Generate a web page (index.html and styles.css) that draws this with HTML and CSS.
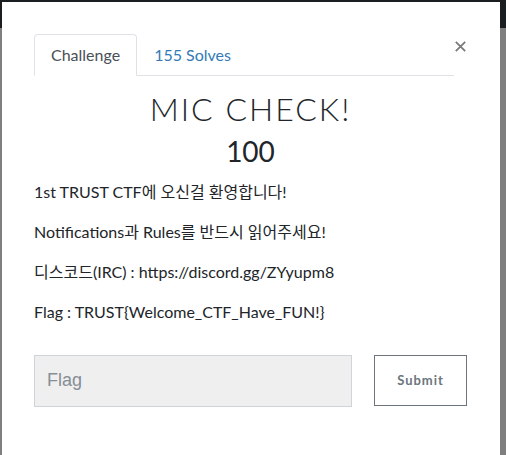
FILE: index.html
```html
<!DOCTYPE html>
<html lang="ko">
<head>
<meta charset="utf-8">
<title>MIC CHECK!</title>
<link rel="stylesheet" href="styles.css">
</head>
<body>
<div class="page">
  <div class="navbar"></div>
  <div class="backdrop"></div>
</div>
<div class="modal">
  <div class="modal-head">
    <nav class="tabs">
      <a class="tab active">Challenge</a>
      <a class="tab">155 Solves</a>
    </nav>
    <button class="close" aria-label="Close">
      <svg width="11" height="11" viewBox="0 0 11 11"><path d="M0.8 0.8 L10.2 10.2 M10.2 0.8 L0.8 10.2" stroke="#7a7a7a" stroke-width="1.8" fill="none"/></svg>
    </button>
  </div>
  <h2 class="title">MIC CHECK!</h2>
  <h3 class="value">100</h3>
  <div class="desc">
    <p>1st TRUST CTF에 오신걸 환영합니다!</p>
    <p>Notifications과 Rules를 반드시 읽어주세요!</p>
    <p>디스코드(IRC) : https://discord.gg/ZYyupm8</p>
    <p>Flag : TRUST{Welcome_CTF_Have_FUN!}</p>
  </div>
  <form class="flag-form">
    <input class="flag-input" type="text" placeholder="Flag">
    <button class="submit" type="button">Submit</button>
  </form>
</div>
</body>
</html>
```

FILE: styles.css
```css
html, body {
  margin: 0;
  padding: 0;
}
body {
  width: 506px;
  height: 455px;
  overflow: hidden;
  background: #7f7f7f;
  font-family: "Lato", "Noto Sans CJK KR", sans-serif;
}
.page {
  display: flex;
  flex-direction: column;
  height: 455px;
}
.navbar {
  height: 28px;
  background: #1b1e21;
}
.backdrop {
  flex: 1;
  background: #7f7f7f;
}
.modal {
  position: absolute;
  left: 2px;
  top: 2px;
  width: 498px;
  height: 470px;
  box-sizing: border-box;
  background: #fff;
  padding: 32px 33px 0 32px;
  color: #212529;
}
.modal-head {
  display: flex;
  align-items: flex-start;
}
.tabs {
  flex: 1;
  display: flex;
  border-bottom: 1px solid #dee2e6;
}
.tab {
  display: block;
  padding: 8px 16px;
  font-size: 16px;
  line-height: 24px;
  border: 1px solid transparent;
  border-bottom: none;
  margin-bottom: -1px;
  border-radius: 4px 4px 0 0;
  color: #337ab7;
}
.tab.active {
  color: #495057;
  border-color: #dee2e6;
  border-bottom: 1px solid #fff;
  background: #fff;
}
.close {
  width: 13px;
  padding: 0 0 0 1px;
  margin-top: 7px;
  border: none;
  background: none;
  display: flex;
}
.title {
  margin: 14px 0 0;
  text-align: center;
  font-size: 32px;
  font-weight: 300;
  line-height: 1.2;
  letter-spacing: 2px;
}
.value {
  margin: 7px 0 0;
  text-align: center;
  font-size: 28px;
  font-weight: 400;
  line-height: 1.2;
}
.desc {
  margin-top: 11px;
}
.desc p {
  margin: 0 0 16px;
  font-size: 16px;
  line-height: 24px;
}
.flag-form {
  display: flex;
  justify-content: space-between;
  align-items: flex-start;
  margin-top: 31px;
}
.flag-input {
  width: 318px;
  height: 52px;
  box-sizing: border-box;
  background: #efefef;
  border: 1px solid #ced4da;
  padding: 0 12px;
  font-family: "Liberation Sans", Arial, sans-serif;
  font-size: 18px;
  color: #495057;
  outline: none;
}
.flag-input::placeholder {
  color: #868e96;
}
.submit {
  width: 93px;
  height: 51px;
  box-sizing: border-box;
  background: #fff;
  border: 1px solid #6c757d;
  font-family: "Lato", sans-serif;
  font-weight: 700;
  font-size: 13px;
  letter-spacing: 1px;
  color: #6c757d;
  padding: 0;
}
```
